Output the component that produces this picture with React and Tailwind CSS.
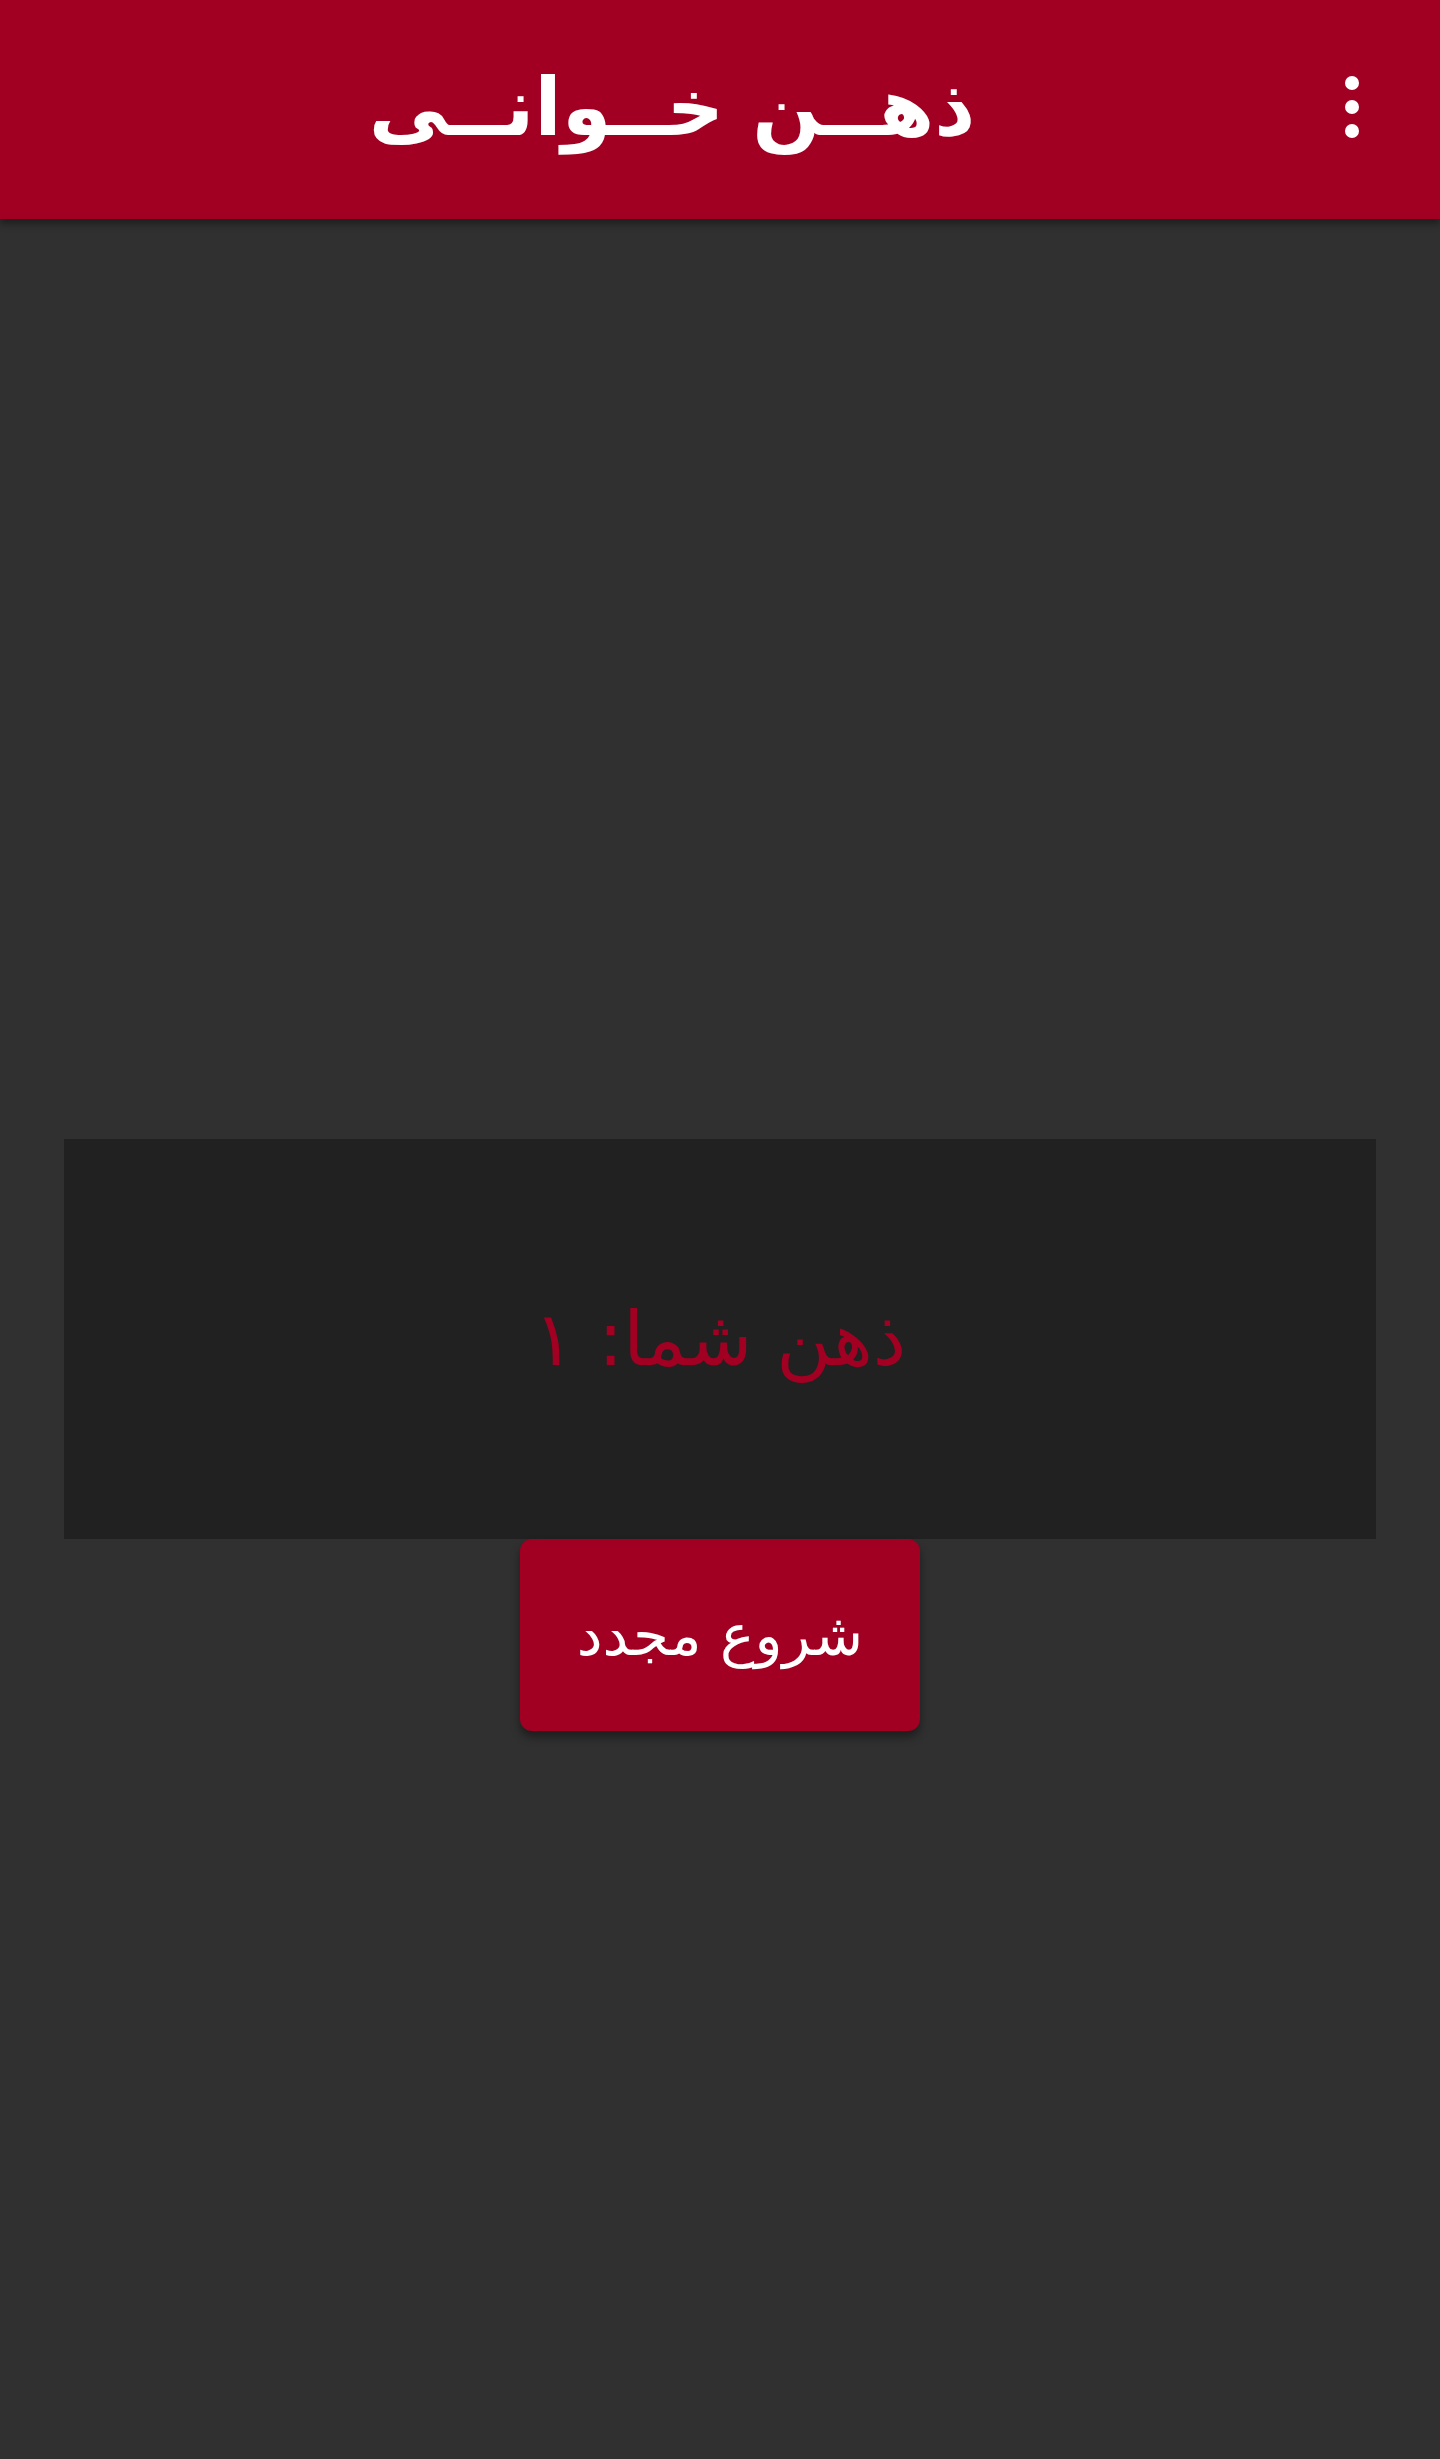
import React from "react";

const App = () => {
  return (
    <div
      dir="rtl"
      className="min-h-[2459px] bg-[#303030] flex flex-col"
      style={{ fontFamily: '"DejaVu Sans", "Noto Sans", sans-serif' }}
    >
      {/* Toolbar */}
      <header className="relative h-[219px] bg-[#a10022] shadow-[0_4px_8px_rgba(0,0,0,0.45)] flex items-center justify-center pr-[96px] z-10">
        <h1 className="text-white text-[80px] font-bold leading-none pb-1 whitespace-nowrap">ذهــن خــوانــی</h1>
        <button className="absolute right-[81px] top-[76px] flex flex-col gap-[10px]">
          <span className="w-[14px] h-[14px] rounded-full bg-white" />
          <span className="w-[14px] h-[14px] rounded-full bg-white" />
          <span className="w-[14px] h-[14px] rounded-full bg-white" />
        </button>
      </header>

      {/* Content */}
      <main className="flex flex-col items-center pt-[920px] px-16">
        <div className="w-full h-[400px] bg-[#212121] flex items-center justify-center">
          <p className="text-[#a10022] text-[75px] leading-none">ذهن شما: ۱</p>
        </div>
        <button className="w-[400px] h-[192px] bg-[#a10022] rounded-[12px] shadow-[0_6px_10px_rgba(0,0,0,0.4)] text-white text-[58px] leading-none">
          شروع مجدد
        </button>
      </main>
    </div>
  );
};

export default App;
